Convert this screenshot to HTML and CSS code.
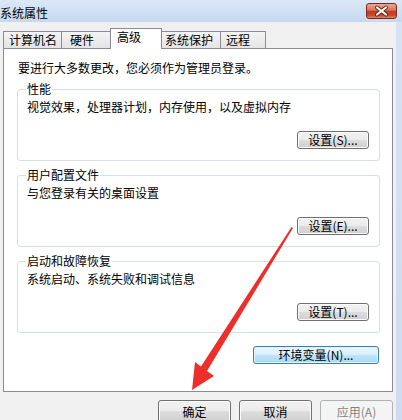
FILE: index.html
```html
<!DOCTYPE html>
<html lang="zh-CN">
<head>
<meta charset="utf-8">
<title>系统属性</title>
<link rel="stylesheet" href="styles.css">
</head>
<body>
<div class="window">
  <div class="titlebar">
    <span class="title">系统属性</span>
    <div class="close">
      <svg width="31" height="16" viewBox="0 0 31 16">
        <path d="M11 4.5 L20 11.5 M20 4.5 L11 11.5" stroke="#6b2014" stroke-width="4" stroke-linecap="round"/>
        <path d="M11 4.5 L20 11.5 M20 4.5 L11 11.5" stroke="#ffffff" stroke-width="2.2" stroke-linecap="round"/>
      </svg>
    </div>
  </div>
  <div class="body">
    <div class="client">
      <div class="tabs">
        <div class="tab t1">计算机名</div>
        <div class="tab t2">硬件</div>
        <div class="tab t3 active">高级</div>
        <div class="tab t4">系统保护</div>
        <div class="tab t5">远程</div>
      </div>
      <div class="panel">
        <p class="note">要进行大多数更改，您必须作为管理员登录。</p>
        <fieldset class="group">
          <legend>性能</legend>
          <p class="desc">视觉效果，处理器计划，内存使用，以及虚拟内存</p>
          <div class="btn-row"><button class="btn set">设置(S)...</button></div>
        </fieldset>
        <fieldset class="group">
          <legend>用户配置文件</legend>
          <p class="desc">与您登录有关的桌面设置</p>
          <div class="btn-row"><button class="btn set">设置(E)...</button></div>
        </fieldset>
        <fieldset class="group">
          <legend>启动和故障恢复</legend>
          <p class="desc">系统启动、系统失败和调试信息</p>
          <div class="btn-row"><button class="btn set">设置(T)...</button></div>
        </fieldset>
        <div class="env-row"><button class="btn default env">环境变量(N)...</button></div>
      </div>
      <div class="actions">
        <button class="btn action">确定</button>
        <button class="btn action">取消</button>
        <button class="btn action disabled">应用(A)</button>
      </div>
    </div>
    <div class="frame-right"></div>
  </div>
  <svg class="annotation" width="402" height="420" viewBox="0 0 402 420">
    <path d="M291.5 227 L293 228 L207 371 L214 376 L192 390 L195 362 L201 366.5 Z" fill="#ec2f2b"/>
  </svg>
</div>
</body>
</html>
```

FILE: styles.css
```css
* { box-sizing: border-box; }

html, body {
  margin: 0;
  padding: 0;
}

body {
  width: 402px;
  height: 420px;
  overflow: hidden;
  font-family: "SimSun", "Noto Sans CJK SC", "Noto Sans", sans-serif;
  font-size: 12px;
  color: #000;
}

.window {
  position: relative;
  width: 402px;
  height: 420px;
  background: #d3e0f1;
}

.titlebar {
  height: 22px;
  display: flex;
  align-items: flex-start;
  justify-content: space-between;
  background: linear-gradient(#dbe8f6, #c6d9ef);
}

.title {
  line-height: 14px;
  padding-top: 6px;
}

.close {
  width: 31px;
  height: 16px;
  margin: 3px 5px 0 0;
  border: 1px solid #7a2a1c;
  border-radius: 3px;
  background: linear-gradient(#e8a996, #d9725a 45%, #c63a22 52%, #c8452c 80%, #dc8a6e);
  display: flex;
  align-items: center;
  justify-content: center;
  overflow: hidden;
}

.close svg {
  display: block;
  flex: none;
}

.body {
  display: flex;
  height: 398px;
}

.client {
  width: 396px;
  background: #f0f0f0;
}

.frame-right {
  flex: 1;
  background: linear-gradient(#d6e3f3, #cddcef);
}

/* tabs */
.tabs {
  display: flex;
  align-items: flex-end;
  height: 26px;
  padding: 6px 0 0 3px;
}

.tab {
  height: 17px;
  border: 1px solid #898c95;
  border-bottom: none;
  margin-left: -1px;
  background: linear-gradient(#f4f4f4, #e4e4e4);
  line-height: 14px;
  padding-top: 1px;
  white-space: nowrap;
}

.tab.t1 { margin-left: 0; width: 59px; padding-left: 5px; }
.tab.t2 { width: 50px; padding-left: 8px; }
.tab.t3 { width: 52px; padding-left: 6px; }
.tab.t4 { width: 60px; padding-left: 3px; }
.tab.t5 { width: 46px; padding-left: 5px; }

.tab.active {
  height: 21px;
  margin-bottom: -1px;
  background: #fff;
  position: relative;
  z-index: 1;
}

/* panel */
.panel {
  width: 390px;
  margin-left: 3px;
  border: 1px solid #898c95;
  background: #fff;
  padding: 0 12px 27px 13px;
}

.note {
  margin: 12px 0 8px 1px;
  line-height: 14px;
}

.group {
  margin: 0 0 8px 0;
  padding: 0 10px 11px 9px;
  border: 1px solid #d5dfe5;
  border-radius: 3px;
  min-inline-size: 0;
}

.group:last-of-type {
  margin-bottom: 0;
}

.group legend {
  padding: 0 1px;
  margin-left: -1px;
  line-height: 12px;
  font-size: 12px;
}

.desc {
  margin: 5px 0 0 0;
  line-height: 14px;
}

.btn-row {
  display: flex;
  justify-content: flex-end;
  margin-top: 17px;
}

.btn {
  font-family: "SimSun", "Noto Sans CJK SC", "Noto Sans", sans-serif;
  font-size: 12px;
  color: #000;
  height: 18px;
  padding: 0;
  line-height: 14px;
  border: 1px solid #707070;
  border-radius: 3px;
  background: linear-gradient(#f2f2f2 0%, #ebebeb 50%, #dddddd 50%, #cfcfcf 100%);
  box-shadow: inset 0 0 0 1px #fbfbfb;
}

.btn.set {
  width: 72px;
}

.env-row {
  display: flex;
  justify-content: flex-end;
  margin-top: 13px;
  padding-right: 1px;
}

.btn.env {
  width: 126px;
}

.btn.default {
  border-color: #3c7fb1;
  background: linear-gradient(#eaf6fd 0%, #d9f0fc 50%, #bee6fd 50%, #a7d9f5 100%);
  box-shadow: inset 0 0 0 1px #dff2fd;
}

.actions {
  display: flex;
  justify-content: flex-end;
  gap: 8px;
  margin-top: 8px;
  padding-right: 3px;
}

.btn.action {
  width: 73px;
  height: 23px;
}

.btn.disabled {
  color: #838383;
  border-color: #adb2b5;
  background: #f4f4f4;
  box-shadow: none;
}

.annotation {
  position: absolute;
  left: 0;
  top: 0;
  pointer-events: none;
}
```
